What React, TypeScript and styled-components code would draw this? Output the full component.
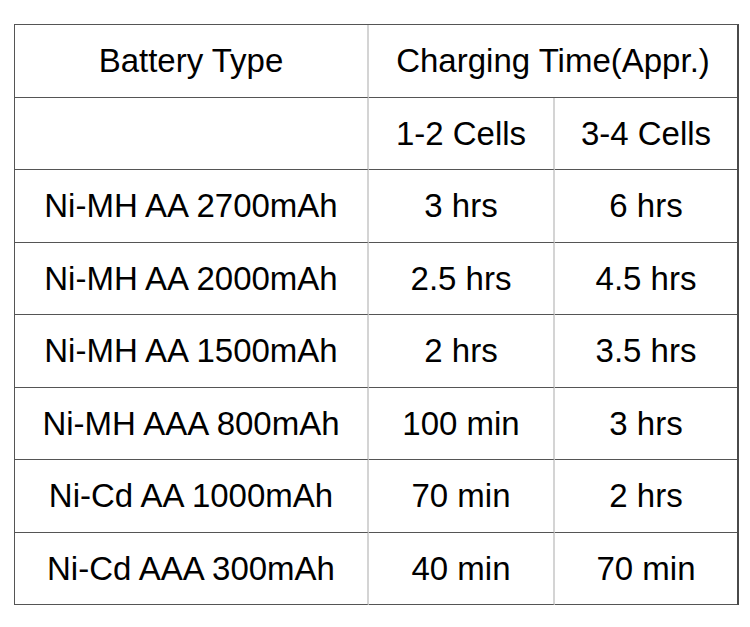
import React from "react";
import styled, { createGlobalStyle } from "styled-components";

const GlobalStyle = createGlobalStyle`
  html, body {
    margin: 0;
    padding: 0;
    background: #ffffff;
  }
  body {
    font-family: "Liberation Sans", Arial, Helvetica, sans-serif;
  }
`;

const Page = styled.div`
  padding: 24px 0 0 14px;
  width: 750px;
  height: 627px;
  box-sizing: border-box;
`;

const Table = styled.div`
  display: grid;
  grid-template-columns: 354px 186px 182px;
  grid-auto-rows: 72.5px;
  width: max-content;
  border-top: 1.5px solid #555555;
  border-left: 1.5px solid #555555;
  border-right: 2px solid #4a4a4a;
`;

const Cell = styled.div<{ $span?: number; $last?: boolean }>`
  grid-column: span ${(p) => p.$span ?? 1};
  display: flex;
  align-items: center;
  justify-content: center;
  box-sizing: border-box;
  padding-top: 1px;
  border-bottom: 1.5px solid #555555;
  border-right: ${(p) => (p.$last ? "none" : "2px solid #d4d4d4")};
  font-size: 33px;
  color: #000000;
  white-space: nowrap;
`;

const rows: [string, string, string][] = [
  ["Ni-MH AA 2700mAh", "3 hrs", "6 hrs"],
  ["Ni-MH AA 2000mAh", "2.5 hrs", "4.5 hrs"],
  ["Ni-MH AA 1500mAh", "2 hrs", "3.5 hrs"],
  ["Ni-MH AAA 800mAh", "100 min", "3 hrs"],
  ["Ni-Cd AA 1000mAh", "70 min", "2 hrs"],
  ["Ni-Cd AAA 300mAh", "40 min", "70 min"],
];

export default function App() {
  return (
    <>
      <GlobalStyle />
      <Page>
        <Table>
          <Cell>Battery Type</Cell>
          <Cell $span={2} $last>
            Charging Time(Appr.)
          </Cell>
          <Cell />
          <Cell>1-2 Cells</Cell>
          <Cell $last>3-4 Cells</Cell>
          {rows.map(([type, a, b]) => (
            <React.Fragment key={type}>
              <Cell>{type}</Cell>
              <Cell>{a}</Cell>
              <Cell $last>{b}</Cell>
            </React.Fragment>
          ))}
        </Table>
      </Page>
    </>
  );
}
